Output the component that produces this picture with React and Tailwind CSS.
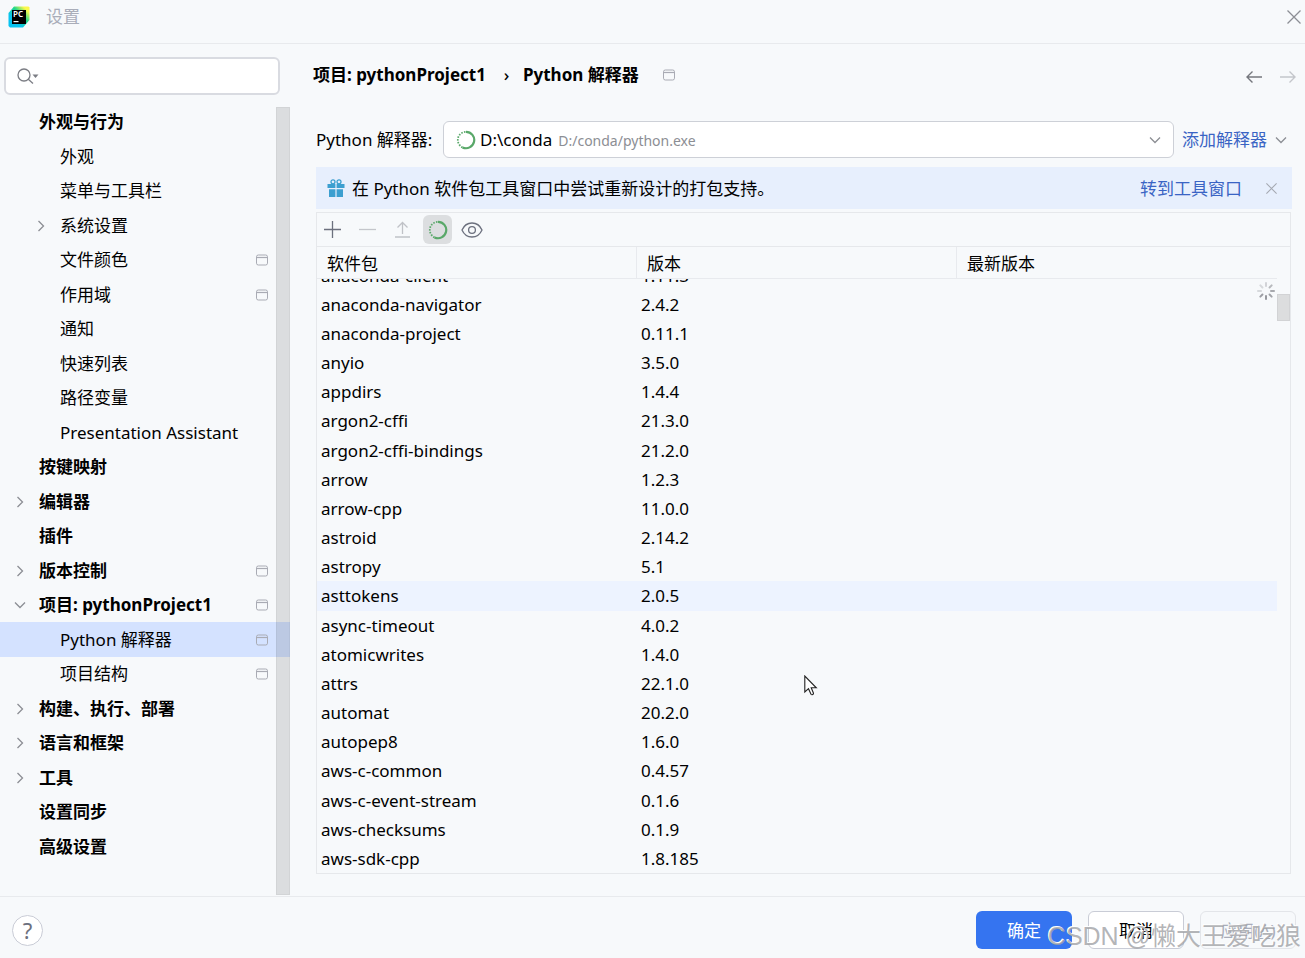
import { useLayoutEffect, useRef, useState } from 'react'

const TREE = [
  { label: '外观与行为', top: true },
  { label: '外观' },
  { label: '菜单与工具栏' },
  { label: '系统设置', arrow: 'right' },
  { label: '文件颜色', scoped: true },
  { label: '作用域', scoped: true },
  { label: '通知' },
  { label: '快速列表' },
  { label: '路径变量' },
  { label: 'Presentation Assistant' },
  { label: '按键映射', top: true },
  { label: '编辑器', top: true, arrow: 'right' },
  { label: '插件', top: true },
  { label: '版本控制', top: true, arrow: 'right', scoped: true },
  { label: '项目: pythonProject1', top: true, arrow: 'down', scoped: true },
  { label: 'Python 解释器', scoped: true },
  { label: '项目结构', scoped: true },
  { label: '构建、执行、部署', top: true, arrow: 'right' },
  { label: '语言和框架', top: true, arrow: 'right' },
  { label: '工具', top: true, arrow: 'right' },
  { label: '设置同步', top: true },
  { label: '高级设置', top: true },
]

const PACKAGES = [
  ['anaconda-client', '1.11.3'],
  ['anaconda-navigator', '2.4.2'],
  ['anaconda-project', '0.11.1'],
  ['anyio', '3.5.0'],
  ['appdirs', '1.4.4'],
  ['argon2-cffi', '21.3.0'],
  ['argon2-cffi-bindings', '21.2.0'],
  ['arrow', '1.2.3'],
  ['arrow-cpp', '11.0.0'],
  ['astroid', '2.14.2'],
  ['astropy', '5.1'],
  ['asttokens', '2.0.5'],
  ['async-timeout', '4.0.2'],
  ['atomicwrites', '1.4.0'],
  ['attrs', '22.1.0'],
  ['automat', '20.2.0'],
  ['autopep8', '1.6.0'],
  ['aws-c-common', '0.4.57'],
  ['aws-c-event-stream', '0.1.6'],
  ['aws-checksums', '0.1.9'],
  ['aws-sdk-cpp', '1.8.185'],
]

function Logo() {
  return (
    <svg width="22" height="22" viewBox="0 0 22 22">
      <defs>
        <linearGradient id="pc" x1="0" y1="1" x2="1" y2="0">
          <stop offset="0.3" stopColor="#07c3f2" />
          <stop offset="0.6" stopColor="#21d789" />
          <stop offset="0.85" stopColor="#fcf84a" />
        </linearGradient>
      </defs>
      <path d="M6 0.5H20.5L21.5 1.5V14L15 21.5H2L0.5 20V7Z" fill="url(#pc)" />
      <rect x="4" y="4" width="14" height="14" fill="#000" />
      <text x="5" y="11" fontSize="8" fontWeight="600" fill="#fff">PC</text>
      <rect x="5.5" y="15" width="5" height="1.2" fill="#fff" />
    </svg>
  )
}

function Chevron({ dir = 'down', className = '' }) {
  return (
    <svg width="12" height="12" viewBox="0 0 12 12" fill="none" stroke="#8c8e94" strokeWidth="1.3" className={className}>
      <path d={dir === 'right' ? 'M3.5 1L8.5 6L3.5 11' : 'M1 3.5L6 8.5L11 3.5'} />
    </svg>
  )
}

function ScopeIcon() {
  return (
    <svg width="12" height="12" viewBox="0 0 12 12" fill="none" stroke="#a9abb4" className="shrink-0">
      <rect x="0.5" y="1" width="11" height="10" rx="1.8" />
      <path d="M1 3.5H11" strokeWidth="1.2" />
    </svg>
  )
}

function Ring() {
  return (
    <svg width="20" height="20" viewBox="0 0 20 20" fill="none" stroke="#59a869">
      <path d="M10 1.8A8.2 8.2 0 1 1 6.5 17.4" strokeWidth="2.2" />
      <path d="M6.5 17.4A8.2 8.2 0 0 1 10 1.8" strokeWidth="1.8" strokeDasharray="1.5 1.3" />
    </svg>
  )
}

function Cross({ size }) {
  return (
    <svg width={size} height={size} viewBox="0 0 14 14" fill="none" stroke="currentColor" strokeWidth="1.3">
      <path d="M0.5 0.5L13.5 13.5M13.5 0.5L0.5 13.5" />
    </svg>
  )
}

function Arrow({ flip }) {
  return (
    <svg width="16" height="14" viewBox="0 0 16 14" fill="none" stroke="currentColor" strokeWidth="1.4">
      <path d={flip ? 'M0 7H15M9.5 1.5L15 7L9.5 12.5' : 'M16 7H1M6.5 1.5L1 7L6.5 12.5'} />
    </svg>
  )
}

function Gift() {
  return (
    <svg width="18" height="18" viewBox="0 0 18 18" fill="none">
      <circle cx="6" cy="2.8" r="2" stroke="#3c9fd0" strokeWidth="1.3" />
      <circle cx="12" cy="2.8" r="2" stroke="#3c9fd0" strokeWidth="1.3" />
      <path d="M0.5 5H8.4V9H0.5ZM9.6 5H17.5V9H9.6ZM2 10.2H8.4V18H2ZM9.6 10.2H16V18H9.6Z" fill="#3c9fd0" />
    </svg>
  )
}

function BusyIcon() {
  return (
    <svg width="20" height="20" viewBox="0 0 20 20" stroke="#8c8e94" strokeWidth="2" strokeLinecap="round">
      {[0.35, 0.6, 0.75, 0.8, 0.9, 0.85, 0.3, 0.3].map((o, i) => (
        <path key={i} d="M10 2V5" opacity={o} transform={`rotate(${i * 45} 10 10)`} />
      ))}
    </svg>
  )
}

function Sidebar() {
  const [selected, setSelected] = useState('Python 解释器')

  return (
    <aside className="w-[290px] shrink-0 flex flex-col pt-[13px]">
      <label className="flex items-center h-[38px] ml-1 mr-[10px] pl-[11px] bg-white border-2 border-[#d9dbe1] rounded-md">
        <svg width="22" height="16" viewBox="0 0 22 16" fill="none" stroke="#7b7d84" strokeWidth="1.3">
          <circle cx="7" cy="7" r="6" />
          <path d="M11.3 11.3L16 15.5" />
          <path d="M15.5 6.5H21.5L18.5 10Z" fill="#7b7d84" stroke="none" />
        </svg>
        <input type="text" aria-label="搜索设置" className="flex-1 min-w-0 px-2 outline-none bg-transparent" />
      </label>

      <nav className="relative flex-1 mt-[10px] mb-px">
        <ul>
          {TREE.map(n => (
            <li key={n.label} className="odd:h-[34px] even:h-[35px]">
              <button
                onClick={() => setSelected(n.label)}
                className={`w-full h-full flex items-center text-left pr-[22px] ${n.top ? 'pl-[14px] font-bold' : 'pl-[35px]'} ${
                  selected === n.label ? 'bg-[#d4e2ff]' : ''
                }`}
              >
                <span className="w-[25px] shrink-0">{n.arrow && <Chevron dir={n.arrow} />}</span>
                <span className="flex-1 whitespace-nowrap">{n.label}</span>
                {n.scoped && <ScopeIcon />}
              </button>
            </li>
          ))}
        </ul>
        <div className="absolute right-0 top-[2px] bottom-0 w-[14px] bg-black/11 border border-black/4" />
      </nav>
    </aside>
  )
}

function PackageTable() {
  const scroller = useRef(null)

  useLayoutEffect(() => {
    scroller.current.scrollTop = 18
  }, [])

  return (
    <div className="relative flex-1 min-h-0">
      <div ref={scroller} className="h-full overflow-y-auto [scrollbar-width:none] pr-[13px]">
        <table className="w-full table-fixed border-separate border-spacing-0 text-left">
          <thead className="sticky top-0 bg-[#f7f9fb]">
            <tr className="h-8">
              {['软件包', '版本', '最新版本'].map(h => (
                <th key={h} className="p-0 pl-[10px] pt-[3px] font-normal border-b border-r last:border-r-0 border-[#e8eaee]">{h}</th>
              ))}
            </tr>
          </thead>
          <tbody>
            {PACKAGES.map(([name, version]) => (
              <tr key={name} className={`h-[29px] nth-[6n]:h-[30px] ${name === 'asttokens' ? 'bg-[#edf3ff]' : ''}`}>
                <td className="p-0 pl-1">{name}</td>
                <td className="p-0 pl-1">{version}</td>
                <td className="p-0" />
              </tr>
            ))}
          </tbody>
        </table>
      </div>
      <div className="absolute right-[14px] top-[34px]"><BusyIcon /></div>
      <div className="absolute right-0 top-[47px] w-[13px] h-[27px] bg-[#dcddde] border border-[#d2d3d5]" />
    </div>
  )
}

export default function App() {
  return (
    <div className="h-screen min-h-[958px] flex flex-col overflow-hidden relative bg-[#f7f9fb] text-[17px] leading-6 text-black font-['Noto_Sans','Noto_Sans_CJK_SC',sans-serif]">
      {/* Title bar */}
      <header className="h-11 shrink-0 flex items-center border-b border-[#e8eaed] pl-2 pr-1 pb-[10px]">
        <Logo />
        <h1 className="ml-4 text-[#a9adb9]">设置</h1>
        <button aria-label="关闭" className="ml-auto text-[#8c8e94]"><Cross size={14} /></button>
      </header>

      <div className="flex-1 min-h-0 flex">
        <Sidebar />

        <main className="flex-1 min-w-0 flex flex-col pl-[26px] pr-[13px] pb-[22px]">
          {/* Breadcrumb */}
          <div className="flex items-center h-[62px] shrink-0 -ml-[3px] -mr-1 font-bold whitespace-nowrap">
            <span>项目: pythonProject1</span>
            <span className="w-[37px] pl-1 text-center font-medium">›</span>
            <span className="mr-6">Python 解释器</span>
            <ScopeIcon />
            <div className="ml-auto flex gap-[18px] mt-1">
              <button aria-label="后退" className="text-[#75777d]"><Arrow /></button>
              <button aria-label="前进" disabled className="text-[#c4c6cb]"><Arrow flip /></button>
            </div>
          </div>

          {/* Interpreter */}
          <div className="flex items-center shrink-0 mt-[15px] mr-[5px] whitespace-nowrap">
            <label htmlFor="interpreter" className="w-[127px] shrink-0 pt-px">Python 解释器:</label>
            <div className="flex-1 flex items-center h-[37px] px-3 bg-white border border-[#cdd0d7] rounded-md">
              <Ring />
              <select id="interpreter" className="appearance-none [field-sizing:content] ml-1 pt-px outline-none">
                <option>D:\conda</option>
              </select>
              <span className="ml-[6px] pt-[3px] text-sm text-[#8c8e94]">D:/conda/python.exe</span>
              <Chevron className="ml-auto" />
            </div>
            <button className="ml-2 pt-px flex items-center gap-2 text-[#3a64c4]">
              添加解释器
              <Chevron />
            </button>
          </div>

          {/* Notice */}
          <div className="flex items-center h-[42px] shrink-0 mt-[9px] pl-[11px] pr-[15px] bg-[#e7effd] whitespace-nowrap">
            <Gift />
            <span className="ml-[7px] pt-[2px]">在 Python 软件包工具窗口中尝试重新设计的打包支持。</span>
            <a href="#packages" className="ml-auto mr-6 pt-[2px] text-[#3a64c4]">转到工具窗口</a>
            <button aria-label="关闭提示" className="text-[#a4a8b1]"><Cross size={11} /></button>
          </div>

          {/* Packages */}
          <section id="packages" className="flex-1 min-h-0 mt-[3px] flex flex-col border border-[#e6e8eb] mr-px">
            <div className="flex items-center h-[34px] shrink-0 pl-[7px] border-b border-[#e6e8eb]">
              <button aria-label="安装">
                <svg width="17" height="17" viewBox="0 0 17 17" stroke="#6c707e" strokeWidth="1.3"><path d="M8.5 0V17M0 8.5H17" /></svg>
              </button>
              <button aria-label="卸载" disabled className="ml-[18px]">
                <svg width="17" height="17" viewBox="0 0 17 17" stroke="#c4c6cb" strokeWidth="1.3"><path d="M0 8.5H17" /></svg>
              </button>
              <button aria-label="升级" disabled className="ml-[18px]">
                <svg width="17" height="17" viewBox="0 0 17 17" fill="none" stroke="#c0c2c7" strokeWidth="1.3"><path d="M8.5 13V1.5M3.5 6.5L8.5 1.5L13.5 6.5M1 16H16" /></svg>
              </button>
              <button aria-label="使用 Conda" className="ml-3 w-[29px] h-[29px] flex items-center justify-center rounded-md bg-[#dcdee0]">
                <Ring />
              </button>
              <button aria-label="显示早期版本" className="ml-[9px]">
                <svg width="22" height="16" viewBox="0 0 22 16" fill="none" stroke="#6c707e" strokeWidth="1.3">
                  <path d="M1 8C3 3.5 6.8 1 11 1S19 3.5 21 8C19 12.5 15.2 15 11 15S3 12.5 1 8Z" />
                  <circle cx="11" cy="8" r="3.4" />
                </svg>
              </button>
            </div>
            <PackageTable />
          </section>
        </main>
      </div>

      {/* Footer */}
      <footer className="h-[62px] shrink-0 flex items-center border-t border-[#e8eaed] pl-3 pr-[9px] pt-[5px]">
        <button aria-label="帮助" className="w-[31px] h-[31px] rounded-full bg-white border border-[#c9ccd6] text-[22px] leading-7 text-[#6c707e]">?</button>
        <div className="ml-auto flex gap-4">
          <button className="w-24 h-[38px] pt-[2px] rounded-md bg-[#3574f0] text-white">确定</button>
          <button className="w-24 h-[38px] pt-[2px] rounded-md bg-white border border-[#c9ccd6]">取消</button>
          <button disabled className="w-24 h-[38px] pt-[2px] rounded-md border border-[#e3e5e9] text-[#a9adb9]">
            应用(<u>A</u>)
          </button>
        </div>
      </footer>

      <span className="absolute right-1 bottom-1 text-[25px] leading-9 whitespace-nowrap text-[#9fa1a5]/80 pointer-events-none [text-shadow:-1px_-1px_0_#fff] font-['Liberation_Sans','Noto_Sans_CJK_SC',sans-serif]">
        CSDN @懒大王爱吃狼
      </span>

      {/* Mouse pointer */}
      <svg width="14" height="21" viewBox="0 0 14 21" className="absolute left-[804px] top-[675px]" fill="#fff" stroke="#222" strokeWidth="1.1">
        <path d="M0.8 1V17L4.5 13.7L7 19.2C7.8 20.3 9.8 19.4 9.4 18L7.2 12.8H12.3Z" />
      </svg>
    </div>
  )
}
